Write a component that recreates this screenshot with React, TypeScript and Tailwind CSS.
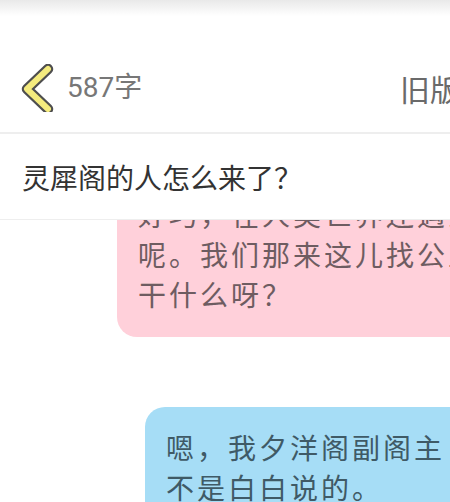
import React from "react";

export default function App() {
  return (
    <div
      className="w-[450px] h-[502px] overflow-hidden bg-white flex flex-col"
      style={{ fontFamily: "'Noto Sans CJK SC', 'Noto Sans', sans-serif" }}
    >
      {/* Header */}
      <div className="h-[132px] shrink-0 flex flex-col">
        <div className="h-[16px] bg-gradient-to-b from-[#e9e9e9] to-white" />
        <div className="mt-[49px] h-[45px] w-[460px] flex items-center justify-between">
          <div className="flex items-center">
            <svg width="36" height="48" viewBox="0 0 36 48" className="ml-[18px]">
              <polyline
                points="30,5 9,25 30,45"
                fill="none"
                stroke="#4e4e4e"
                strokeWidth="10.5"
                strokeLinecap="round"
                strokeLinejoin="round"
              />
              <polyline
                points="30,5 9,25 30,45"
                fill="none"
                stroke="#f4eb7e"
                strokeWidth="6"
                strokeLinecap="round"
                strokeLinejoin="round"
              />
            </svg>
            <span
              className="ml-[13px] text-[28px] text-[#777777] leading-none"
              style={{ fontFamily: "Roboto, 'Noto Sans CJK SC', sans-serif" }}
            >
              587字
            </span>
          </div>
          <span className="text-[30px] text-[#6a6a6a] leading-none whitespace-nowrap">旧版</span>
        </div>
      </div>
      <div className="h-[2px] bg-[#eeeeee] shrink-0" />

      {/* Title */}
      <div className="h-[86px] shrink-0 flex items-center pl-[22px] text-[28px] text-[#333333] border-b border-[#eeeeee]">
        灵犀阁的人怎么来了？
      </div>

      {/* Chat */}
      <div className="flex-1 overflow-hidden">
        <div className="mt-[-46px] flex flex-col">
          <div className="ml-[117px] w-[420px] rounded-[20px] bg-[#ffd0da] pl-[21px] pt-[20px] pb-[23px] text-[28px] tracking-[3px] leading-[40px] text-[#6e5c61] whitespace-nowrap">
            <div>好巧，在人类世界还遇到了</div>
            <div>呢。我们那来这儿找公主</div>
            <div>干什么呀？</div>
          </div>
          <div className="mt-[70px] ml-[145px] w-[400px] rounded-[20px] bg-[#a6ddf6] pl-[21px] pt-[20px] pb-[18px] text-[28px] tracking-[3px] leading-[40px] text-[#3f5a66] whitespace-nowrap">
            <div>嗯，我夕洋阁副阁主</div>
            <div>不是白白说的。</div>
          </div>
        </div>
      </div>
    </div>
  );
}
